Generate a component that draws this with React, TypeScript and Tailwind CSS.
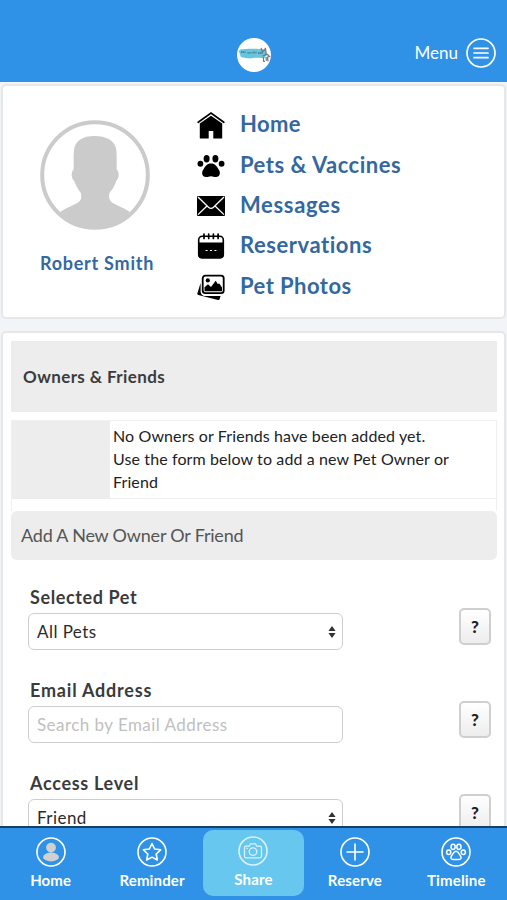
import type { ReactNode } from 'react';

const PAW = (
  <>
    <ellipse cx="3.4" cy="9.800" rx="2.900" ry="3" />
    <ellipse cx="9.6" cy="4.800" rx="3" ry="3.700" />
    <ellipse cx="18.4" cy="4.800" rx="3" ry="3.700" />
    <ellipse cx="24.6" cy="9.800" rx="2.900" ry="3" />
    <path d="M14 9.500c4.300 0 5.700 2.800 6.900 4.700 1 1.600 2 2.800 2 4.800 0 2.500-1.700 4-4 4-1.900 0-2.900-.8-4.900-.8s-3 .8-4.900.8c-2.300 0-4-1.500-4-4 0-2 1-3.200 2-4.800C8.300 12.300 9.700 9.500 14 9.500z" />
  </>
);

const menuItems: { label: string; tracking: string; icon: ReactNode }[] = [
  {
    label: 'Home',
    tracking: 'tracking-[0.4px]',
    icon: (
      <svg viewBox="0 0 28 28" className="size-7">
        <path d="M1.200 11.300 14 2l12.800 9.300" fill="none" stroke="#000" strokeWidth="1.700" strokeLinecap="round" />
        <path d="M2.800 12.600 14 4.700l11.200 7.900V27a.6.600 0 0 1-.6.600H16.300v-7.600h-4.600v7.600H3.400a.6.600 0 0 1-.6-.6z" />
      </svg>
    ),
  },
  {
    label: 'Pets & Vaccines',
    tracking: 'tracking-[0.5px]',
    icon: <svg viewBox="0 0 28 24" className="h-6 w-7">{PAW}</svg>,
  },
  {
    label: 'Messages',
    tracking: 'tracking-[0.65px]',
    icon: (
      <svg viewBox="0 0 28 20" className="h-5 w-7">
        <rect width="28" height="20" rx="1" />
        <path d="M1 1l10.500 10.200q2.500 2.300 5 0L27 1M1 18.600l8.700-8.300M27 18.600l-8.700-8.300" fill="none" stroke="#fff" strokeWidth="1.300" />
      </svg>
    ),
  },
  {
    label: 'Reservations',
    tracking: 'tracking-[0.55px]',
    icon: (
      <svg viewBox="0 0 28 26" className="h-[26px] w-7">
        <rect x="1.700" y="3.200" width="24.600" height="21.600" rx="3.500" fill="#fff" stroke="#000" strokeWidth="1.600" />
        <path d="M1 9.600h26V21.500a4 4 0 0 1-4 4H5a4 4 0 0 1-4-4z" />
        <path d="M7 1v4.500M11.700 1v4.500M16.400 1v4.500M21.100 1v4.500" stroke="#000" strokeWidth="1.700" strokeLinecap="round" />
        <path d="M8.600 17.500h2M13 17.500h2M17.400 17.500h2" stroke="#fff" strokeWidth="1.200" />
      </svg>
    ),
  },
  {
    label: 'Pet Photos',
    tracking: 'tracking-[0.45px]',
    icon: (
      <svg viewBox="0 0 28 26" className="h-[26px] w-7">
        <path d="M3.600 9 .4 19.200a1.400 1.400 0 0 0 1 1.800L21 25.900a1.400 1.400 0 0 0 1.700-1l.9-3H8a4.300 4.300 0 0 1-4.400-4.300z" />
        <rect x="5.700" y="1.700" width="21" height="17.400" rx="2.600" fill="#fff" stroke="#000" strokeWidth="1.800" />
        <circle cx="10.800" cy="6.400" r="2.100" />
        <path d="M7.500 17.200v-3.900l3.500-3 3 2.800 4.700-6.300 2.100 3.300 1.500-.7 2.700 4v3.800z" />
      </svg>
    ),
  },
];

const fields = [
  { label: 'Selected Pet', value: 'All Pets', select: true, tracking: 'tracking-[0.6px]' },
  { label: 'Email Address', value: 'Search by Email Address', select: false, tracking: 'tracking-[0.8px]' },
  { label: 'Access Level', value: 'Friend', select: true, tracking: 'tracking-[0.7px]' },
];

const tabs: { label: string; active?: boolean; icon: ReactNode }[] = [
  {
    label: 'Home',
    icon: (
      <g fill="#cfd0d2" stroke="none">
        <circle cx="15" cy="10.600" r="4.900" />
        <ellipse cx="15" cy="20" rx="8" ry="4.400" />
      </g>
    ),
  },
  {
    label: 'Reminder',
    icon: <path d="m15 6.500 2.600 5.500 6 .8-4.400 4.200 1.100 6-5.300-2.900L9.700 23l1.100-6-4.400-4.200 6-.8z" strokeLinejoin="round" />,
  },
  {
    label: 'Share',
    active: true,
    icon: (
      <g strokeWidth="1.300">
        <path d="M8 10.200h3.300l1.200-2.400h5l1.200 2.400H22a1.500 1.500 0 0 1 1.500 1.500v8.600a1.500 1.500 0 0 1-1.500 1.500H8a1.500 1.500 0 0 1-1.500-1.500v-8.600A1.500 1.500 0 0 1 8 10.200z" />
        <circle cx="15" cy="15.600" r="3.800" />
        <path d="M8.300 12.400h1.500" />
      </g>
    ),
  },
  { label: 'Reserve', icon: <path d="M15 7v16M7 15h16" strokeLinecap="round" /> },
  {
    label: 'Timeline',
    icon: (
      <g strokeWidth="1.500">
        <ellipse cx="7.700" cy="15.300" rx="2.100" ry="2.300" />
        <ellipse cx="12.100" cy="9.800" rx="2.100" ry="2.600" />
        <ellipse cx="17.900" cy="9.800" rx="2.100" ry="2.600" />
        <ellipse cx="22.300" cy="15.300" rx="2.100" ry="2.300" />
        <path d="M15 14.200c1.800 0 2.500 1.700 3.500 3.200 1.200 1.700 1.800 2.300 1.600 3.600-.2 1.200-1 1.500-2 1.500h-6.200c-1 0-1.800-.3-2-1.500-.2-1.300.4-1.900 1.600-3.600 1-1.500 1.700-3.200 3.500-3.200z" />
      </g>
    ),
  },
];

function Header() {
  return (
    <header className="grid h-[82px] shrink-0 grid-cols-3 items-end bg-[#2f92e6] pb-[10px]">
      <svg viewBox="0 0 34 34" className="col-start-2 size-[34px] justify-self-center">
        <circle cx="17" cy="17" r="17" fill="#fff" />
        <path d="M1.800 13c1.500-2.500 4-1.600 6.500-1.900 6-.5 11-.3 19 .3l1.700 2.200-.7 6c-4 .8-8-.4-12 .5-4 .8-9-.1-12.500-1.400z" fill="#66c6df" />
        <path d="M4 14.200h5M10.500 14.800h4M15.500 14.500h4M21 15h5" stroke="#547f8e" strokeWidth="1.800" strokeDasharray="1.200 .5" />
        <path d="m24 10 1.500 3.800 2.200-1.800.7-2 .8 5.500-2 2.300M25.500 18l5-1.500 2 2-2 .6.500 4.300M26.500 19v4.200l1.500.2M29 19l.4 3.800" fill="none" stroke="#6c7883" strokeWidth="1.200" />
      </svg>
      <div className="flex items-center justify-end gap-2 pr-[11px] pb-1 text-white">
        <span className="text-[17px]">Menu</span>
        <svg viewBox="0 0 30 30" className="size-[30px]" fill="none" stroke="#fff" strokeWidth="1.700">
          <circle cx="15" cy="15" r="14" />
          <path d="M8 10.300h14M8 15h14M8 19.700h14" strokeLinecap="round" />
        </svg>
      </div>
    </header>
  );
}

function Profile() {
  return (
    <section className="mx-px mt-[2px] flex h-[235px] shrink-0 rounded-[5px] border-2 border-[#e6e7e8] bg-white">
      <div className="flex w-[184px] flex-col items-center pt-[34px]">
        <svg viewBox="0 0 110 110" className="size-[110px]" fill="#cbcbcb">
          <path d="M20 92c7-5 19-8 20.800-12.500.8-2 .3-4 .3-6-3-4-6-9-6.800-12.500-3-2.500-3.300-7.500-1.600-10.500l1-1c0-7-.4-13 .3-19C34.800 20.500 43 16 54.500 16S75.500 20.500 76.400 30.500c.5 6 .2 12 .3 19l1 1c1.700 3 1.200 8-1.500 10.500-1.200 4.500-4 8.500-7 12.500 0 2-.4 4 .4 6C71 84 83 87 90 92c-18 20-52 20-70 0z" />
          <circle cx="55" cy="55" r="52.800" fill="none" stroke="#cbcbcb" strokeWidth="4" />
        </svg>
        <p className="mt-[21px] ml-[4px] text-[18px] leading-6 font-bold tracking-[0.75px] whitespace-nowrap text-[#34689f]">Robert Smith</p>
      </div>
      <ul className="flex flex-col pt-[18px] pl-[10px]">
        {menuItems.map((item) => (
          <li key={item.label} className="flex h-[40.4px] items-center gap-[15px]">
            <span className="flex w-7 justify-center pt-[2px]">{item.icon}</span>
            <span className={`text-[22px] leading-7 font-bold text-[#34689f] ${item.tracking}`}>{item.label}</span>
          </li>
        ))}
      </ul>
    </section>
  );
}

function Field({ label, value, select, tracking }: (typeof fields)[number]) {
  return (
    <div className="flex h-[93px] justify-between pr-[6px] pl-[17px]">
      <div>
        <p className={`pl-[2px] text-[18px] leading-6 font-bold text-[#3b3b3b] ${tracking}`}>{label}</p>
        <div className="mt-[4px] flex h-[37px] w-[315px] items-center justify-between rounded-[6px] border border-[#cecece] pr-[6px] pl-[8px]">
          <span className={`pt-px text-[17px] tracking-[0.45px] ${select ? 'text-[#2b2b2b]' : 'text-[#bfbfbf]'}`}>{value}</span>
          {select && (
            <svg viewBox="0 0 8 12" className="h-3 w-2" fill="#333">
              <path d="M4 0l3.600 5H.4zM4 12l3.600-5H.4z" />
            </svg>
          )}
        </div>
      </div>
      <button className="mt-[23px] h-[37px] w-8 rounded-[5px] border-2 border-[#cfcfcf] bg-linear-to-b from-white to-[#ededed] text-[17px] font-black text-[#222]">
        ?
      </button>
    </div>
  );
}

function Owners() {
  return (
    <section className="mx-px mt-[12px] h-[540px] shrink-0 rounded-[5px] border-2 border-[#e6e7e8] bg-white pt-[8px] pr-[7px] pl-[8px]">
      <h2 className="flex h-[71px] items-center bg-[#ededed] pl-3 text-[17px] font-bold tracking-[0.4px] text-[#3b3b3b]">Owners &amp; Friends</h2>
      <div className="mt-[8px] h-[91px] border-x border-t border-[#f0f0f0]">
        <div className="flex h-[78px] border-b border-[#ededed]">
          <div className="w-[98px] bg-[#ededed]" />
          <p className="flex-1 pt-[3px] pl-[3px] text-[16px] leading-[23px] tracking-[0.11px] text-[#222]">
            No Owners or Friends have been added yet.
            <br />
            Use the form below to add a new Pet Owner or
            <br />
            Friend
          </p>
        </div>
      </div>
      <h3 className="flex h-[49px] items-center rounded-[6px] bg-[#ededed] pl-[10px] text-[18px] tracking-[-0.2px] text-[#555]">Add A New Owner Or Friend</h3>
      <div className="pt-[25px]">
        {fields.map((field) => (
          <Field key={field.label} {...field} />
        ))}
      </div>
    </section>
  );
}

function TabBar() {
  return (
    <nav className="grid h-[74px] shrink-0 grid-cols-5 border-t-2 border-[#183f66] bg-[#2f92e6] pt-[2px]">
      {tabs.map((tab) => (
        <a
          key={tab.label}
          className={`flex h-[66px] flex-col items-center text-white ${tab.active ? 'rounded-[10px] bg-[#67c7ee] pt-[6px]' : 'pt-[7px]'}`}
        >
          <svg viewBox="0 0 30 30" className="size-[30px]" fill="none" stroke={tab.active ? '#d9f2fc' : '#fff'} strokeWidth="1.600">
            <circle cx="15" cy="15" r="14" />
            {tab.icon}
          </svg>
          <span className="mt-[3px] text-[15px] leading-5 font-bold tracking-[0.15px]">{tab.label}</span>
        </a>
      ))}
    </nav>
  );
}

export default function App() {
  return (
    <div className="flex h-[900px] w-[507px] flex-col overflow-hidden bg-[#f2f5f8] font-[Lato,sans-serif]">
      <Header />
      <main className="flex min-h-0 flex-1 flex-col overflow-hidden">
        <Profile />
        <Owners />
      </main>
      <TabBar />
    </div>
  );
}
